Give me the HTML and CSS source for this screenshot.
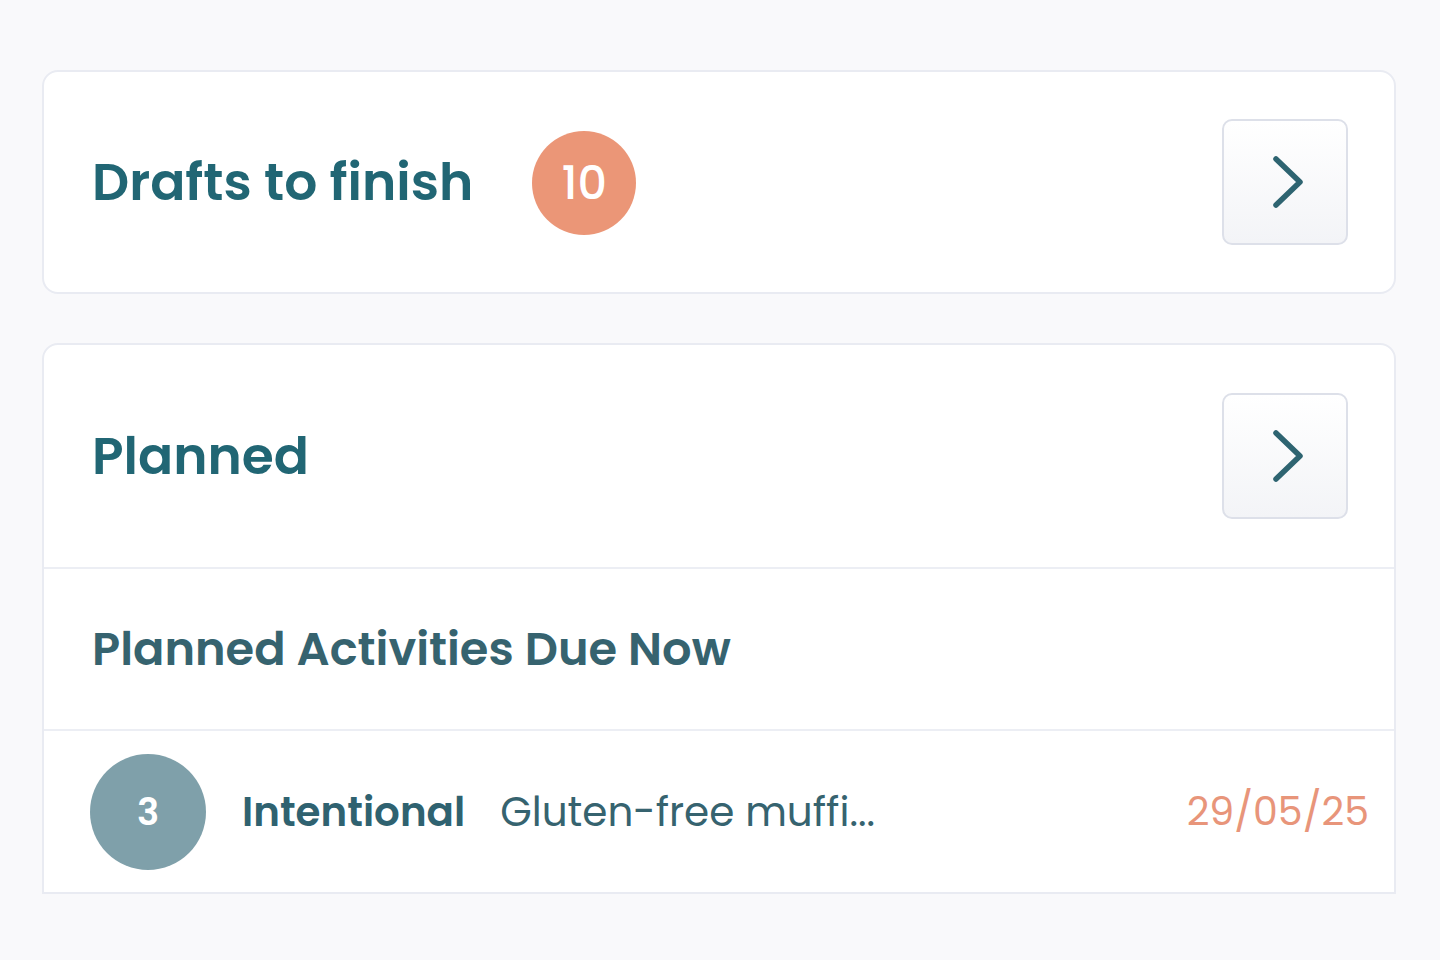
FILE: index.html
```html
<!DOCTYPE html>
<html lang="en">
<head>
<meta charset="utf-8">
<title>Dashboard</title>
<link rel="stylesheet" href="styles.css">
</head>
<body>
<main class="page">
  <section class="card card-drafts">
    <div class="card-head">
      <div class="head-left">
        <h2 class="title">Drafts to finish</h2>
        <span class="badge">10</span>
      </div>
      <button class="chev-btn" aria-label="Open drafts">
        <svg viewBox="0 0 40 56" width="40" height="56"><path d="M9 5 L33 28 L9 51" fill="none" stroke="#2e6471" stroke-width="5.5" stroke-linecap="round" stroke-linejoin="round"/></svg>
      </button>
    </div>
  </section>

  <section class="card card-planned">
    <div class="card-head">
      <h2 class="title">Planned</h2>
      <button class="chev-btn" aria-label="Open planned">
        <svg viewBox="0 0 40 56" width="40" height="56"><path d="M9 5 L33 28 L9 51" fill="none" stroke="#2e6471" stroke-width="5.5" stroke-linecap="round" stroke-linejoin="round"/></svg>
      </button>
    </div>
    <div class="subhead">
      <h3 class="subtitle">Planned Activities Due Now</h3>
    </div>
    <div class="row">
      <span class="count">3</span>
      <span class="kind">Intentional</span>
      <span class="desc">Gluten-free muffi...</span>
      <span class="date">29/05/25</span>
    </div>
  </section>
</main>
</body>
</html>
```

FILE: styles.css
```css
* { box-sizing: border-box; }
html, body { margin: 0; padding: 0; }
body {
  background: #f9f9fb;
  font-family: "Poppins", "Inter", "Noto Sans", sans-serif;
  width: 1440px;
  height: 960px;
  overflow: hidden;
}
.page {
  padding: 70px 44px 0 42px;
  display: flex;
  flex-direction: column;
  gap: 49px;
}
.card {
  background: #ffffff;
  border: 2px solid #e9ebf2;
  border-radius: 16px;
}
.card-planned {
  border-bottom-left-radius: 0;
  border-bottom-right-radius: 0;
}
.card-head {
  height: 222px;
  display: flex;
  align-items: center;
  justify-content: space-between;
  padding: 0 46px 0 48px;
}
.card-drafts .card-head { height: 220px; }
.head-left {
  display: flex;
  align-items: center;
  gap: 59px;
}
.title {
  margin: 0;
  font-size: 51.9px;
  font-weight: 600;
  color: #216674;
}
.badge {
  width: 104px;
  height: 104px;
  border-radius: 50%;
  background: #eb9677;
  color: #fff;
  font-size: 46px;
  font-weight: 500;
  display: flex;
  align-items: center;
  justify-content: center;
  margin-top: 2px;
}
.chev-btn {
  width: 126px;
  height: 126px;
  border: 2px solid #dde0e9;
  border-radius: 10px;
  background: linear-gradient(#ffffff, #f3f4f7);
  display: flex;
  align-items: center;
  justify-content: center;
  padding: 0 0 0 4px;
}
.chev-btn svg { display: block; }
.subhead {
  height: 162px;
  border-top: 2px solid #eceef4;
  display: flex;
  align-items: center;
  padding: 0 48px;
}
.subtitle {
  margin: 0;
  font-size: 46.3px;
  font-weight: 600;
  color: #36636f;
}
.row {
  height: 163px;
  border-top: 2px solid #eceef4;
  display: flex;
  align-items: center;
  padding: 0 25px 0 46px;
}
.count {
  width: 116px;
  height: 116px;
  border-radius: 50%;
  background: #7fa0aa;
  color: #fff;
  font-size: 37px;
  font-weight: 600;
  display: flex;
  align-items: center;
  justify-content: center;
  flex: none;
}
.kind {
  margin-left: 36px;
  font-size: 40.4px;
  font-weight: 600;
  color: #2f6270;
}
.desc {
  margin-left: 35px;
  font-size: 40.5px;
  font-weight: 400;
  color: #36636f;
}
.date {
  margin-left: auto;
  font-size: 39.5px;
  font-weight: 400;
  color: #e8957a;
}
```
